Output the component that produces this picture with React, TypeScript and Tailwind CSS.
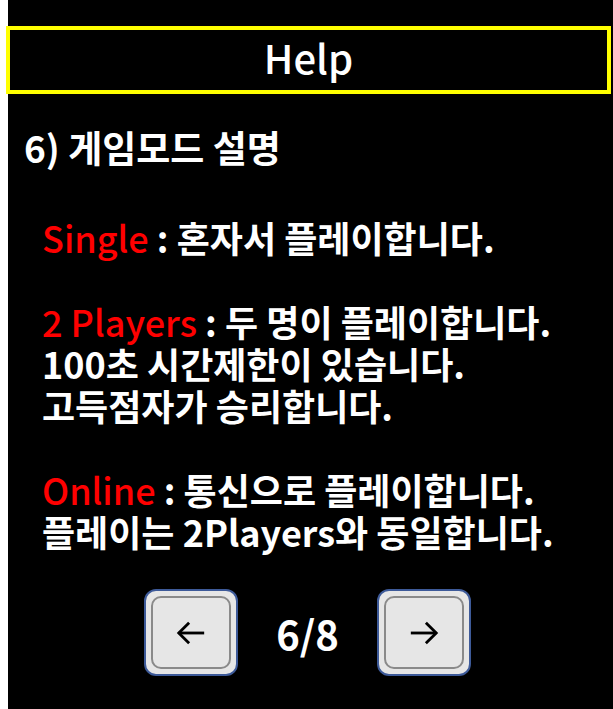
import React from 'react';

const font = { fontFamily: '"Noto Sans CJK KR", "Noto Sans", sans-serif' };

const lines: { label?: string; text: string }[][] = [
  [{ label: 'Single', text: ' : 혼자서 플레이합니다.' }],
  [
    { label: '2 Players', text: ' : 두 명이 플레이합니다.' },
    { text: '100초 시간제한이 있습니다.' },
    { text: '고득점자가 승리합니다.' },
  ],
  [
    { label: 'Online', text: ' : 통신으로 플레이합니다.' },
    { text: '플레이는 2Players와 동일합니다.' },
  ],
];

const NavButton = ({ dir }: { dir: 'left' | 'right' }) => (
  <button className="w-[94px] h-[87px] rounded-[12px] border-2 border-[#3d5a99] bg-[#e6e6e6] p-[5px]">
    <div className="w-full h-full rounded-[10px] border-2 border-[#8a8a8a] flex items-center justify-center">
      <svg width="32" height="30" viewBox="0 0 34 30" fill="none" stroke="#000" strokeWidth="3">
        {dir === 'left' ? (
          <>
            <path d="M31 15H4" />
            <path d="M15 4L4 15l11 11" />
          </>
        ) : (
          <>
            <path d="M3 15h27" />
            <path d="M19 4l11 11-11 11" />
          </>
        )}
      </svg>
    </div>
  </button>
);

export default function App() {
  return (
    <div className="w-[613px] h-[709px] bg-white pl-[8px]" style={font}>
      <div className="h-full bg-black flex flex-col pt-[26px]">
        <div className="-ml-[2px] mr-[2px] h-[68px] border-[4px] border-[#ffff00] flex items-center justify-center">
          <span className="text-white text-[40px] font-medium leading-none -mt-[7px]">Help</span>
        </div>

        <h2 className="text-white text-[37px] font-bold leading-[42px] mt-[32px] ml-[16px] whitespace-nowrap">6) 게임모드 설명</h2>

        <div className="mt-[48px] ml-[34px] flex flex-col gap-[42px]">
          {lines.map((group, gi) => (
            <div key={gi} className="flex flex-col">
              {group.map((l, li) => (
                <p key={li} className="text-white text-[36px] font-bold leading-[42px] whitespace-nowrap">
                  {l.label && <span className="text-[#ff0000] font-medium">{l.label}</span>}
                  {l.text}
                </p>
              ))}
            </div>
          ))}
        </div>

        <div className="mt-[37px] flex items-center justify-center gap-[38px] pr-[6px]">
          <NavButton dir="left" />
          <span className="text-white text-[40px] font-bold leading-none">6/8</span>
          <NavButton dir="right" />
        </div>
      </div>
    </div>
  );
}
